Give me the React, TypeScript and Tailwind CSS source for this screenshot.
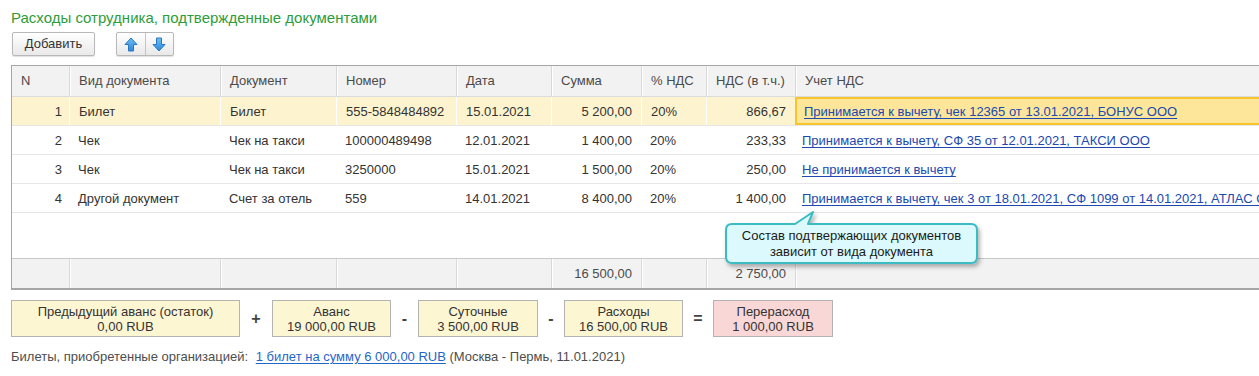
import React from 'react';

const COLS = 'grid-cols-[57px_151px_116px_120px_95px_90px_65px_89px_1fr]';

type Row = {
  n: string;
  kind: string;
  doc: string;
  num: string;
  date: string;
  sum: string;
  pct: string;
  vat: string;
  acc: string;
};

const ROWS: Row[] = [
  { n: '1', kind: 'Билет', doc: 'Билет', num: '555-5848484892', date: '15.01.2021', sum: '5 200,00', pct: '20%', vat: '866,67', acc: 'Принимается к вычету, чек 12365 от 13.01.2021, БОНУС ООО' },
  { n: '2', kind: 'Чек', doc: 'Чек на такси', num: '100000489498', date: '12.01.2021', sum: '1 400,00', pct: '20%', vat: '233,33', acc: 'Принимается к вычету, СФ 35 от 12.01.2021, ТАКСИ ООО' },
  { n: '3', kind: 'Чек', doc: 'Чек на такси', num: '3250000', date: '15.01.2021', sum: '1 500,00', pct: '20%', vat: '250,00', acc: 'Не принимается к вычету' },
  { n: '4', kind: 'Другой документ', doc: 'Счет за отель', num: '559', date: '14.01.2021', sum: '8 400,00', pct: '20%', vat: '1 400,00', acc: 'Принимается к вычету, чек 3 от 18.01.2021, СФ 1099 от 14.01.2021, АТЛАС ООО' },
];

const HEADERS = ['N', 'Вид документа', 'Документ', 'Номер', 'Дата', 'Сумма', '% НДС', 'НДС (в т.ч.)', 'Учет НДС'];

const Arrow: React.FC<{ down?: boolean }> = ({ down }) => (
  <svg width="14" height="15" viewBox="0 0 14 15" className={down ? 'rotate-180' : ''}>
    <defs>
      <linearGradient id={down ? 'ag-d' : 'ag-u'} x1="0" y1="0" x2="0" y2="1">
        <stop offset="0" stopColor={down ? '#2f86d8' : '#6cc0f5'} />
        <stop offset="1" stopColor={down ? '#6cc0f5' : '#2f86d8'} />
      </linearGradient>
    </defs>
    <path d="M7 1 L13 7.5 H9.5 V14 H4.5 V7.5 H1 Z" fill={`url(#${down ? 'ag-d' : 'ag-u'})`} stroke="#2a78c4" strokeWidth="1" strokeLinejoin="round" />
  </svg>
);

const SumBox: React.FC<{ title: string; value: string; w: string; red?: boolean }> = ({ title, value, w, red }) => (
  <div
    className={`${w} h-[37px] border border-[#b3b3b3] flex flex-col items-center justify-center text-[13px] leading-[15px] text-[#333] ${
      red ? 'bg-[#f9d7d7]' : 'bg-[#fdf6d3]'
    }`}
  >
    <span>{title}</span>
    <span>{value}</span>
  </div>
);

const Op: React.FC<{ ch: string; w: string }> = ({ ch, w }) => (
  <div className={`${w} flex items-center justify-center text-[16px] font-bold text-[#444]`}>{ch}</div>
);

const HDIV = 'border-l border-[#d8d8d8] shadow-[inset_1px_0_0_#ffffff]';

export default function App() {
  return (
    <div
      className="relative w-[1259px] h-[376px] overflow-hidden bg-white text-[13px] text-[#333]"
      style={{ fontFamily: '"Liberation Sans", Arial, sans-serif' }}
    >
      <div className="pl-[11px] pt-[8px] text-[15px] leading-[20px] text-[#2e9c3a]">
        Расходы сотрудника, подтвержденные документами
      </div>

      {/* toolbar */}
      <div className="flex items-center pl-[12px] mt-[4px] gap-[21px]">
        <button className="h-[24px] w-[83px] rounded-[2px] border border-[#b8b8b8] bg-gradient-to-b from-white to-[#e9e9e9] shadow-[0_1px_1px_rgba(0,0,0,0.12)] text-[13px] text-[#333]">
          Добавить
        </button>
        <div className="flex h-[24px] w-[58px] rounded-[2px] border border-[#b8b8b8] bg-gradient-to-b from-white to-[#e9e9e9] shadow-[0_1px_1px_rgba(0,0,0,0.12)]">
          <div className="flex-1 flex items-center justify-center border-r border-[#c4c4c4]">
            <Arrow />
          </div>
          <div className="flex-1 flex items-center justify-center">
            <Arrow down />
          </div>
        </div>
      </div>

      {/* table */}
      <div className="ml-[11px] mt-[9px] w-[1300px] border-t border-l border-b-2 border-[#a6a6a6]">
        <div className={`grid ${COLS} h-[31px] bg-[#f2f2f2] text-[#4a4a4a] border-b border-[#dcdcdc]`}>
          {HEADERS.map((h, i) => (
            <div key={h} className={`flex items-center px-[9px] pb-[1px] ${i > 0 ? HDIV : ''}`}>
              {h}
            </div>
          ))}
        </div>

        {ROWS.map((r, idx) => {
          const sel = idx === 0;
          const cell = `flex items-center px-[9px] pt-[2px] whitespace-nowrap overflow-hidden ${sel ? 'border-l border-white' : ''}`;
          return (
            <div
              key={r.n}
              className={`grid ${COLS} h-[29px] border-b border-[#e6e6e6] ${sel ? 'bg-[#fdf3cf]' : 'bg-white'}`}
            >
              <div className="flex items-center justify-end px-[7px] pt-[2px]">{r.n}</div>
              <div className={cell}>{r.kind}</div>
              <div className={cell}>{r.doc}</div>
              <div className={cell}>{r.num}</div>
              <div className={cell}>{r.date}</div>
              <div className={`${cell} justify-end`}>{r.sum}</div>
              <div className={cell}>{r.pct}</div>
              <div className={`${cell} justify-end`}>{r.vat}</div>
              <div
                className={`flex items-center px-[7px] pt-[2px] whitespace-nowrap overflow-hidden ${
                  sel ? 'bg-[#fde699] border-2 border-[#f6c42c]' : ''
                }`}
              >
                <a className="text-[#2049b0] underline underline-offset-2 decoration-[#2049b0]">{r.acc}</a>
              </div>
            </div>
          );
        })}

        <div className="h-[45px] bg-white" />

        <div className={`grid ${COLS} h-[30px] bg-[#f2f2f2] border-t border-[#c8c8c8] text-[#4a4a4a]`}>
          <div />
          <div className={HDIV} />
          <div className={HDIV} />
          <div className={HDIV} />
          <div className={HDIV} />
          <div className={`${HDIV} flex items-center justify-end px-[9px]`}>16 500,00</div>
          <div className={HDIV} />
          <div className={`${HDIV} flex items-center justify-end px-[9px]`}>2 750,00</div>
          <div className={HDIV} />
        </div>
      </div>

      {/* totals */}
      <div className="flex pl-[11px] mt-[10px]">
        <SumBox title="Предыдущий аванс (остаток)" value="0,00 RUB" w="w-[229px]" />
        <Op ch="+" w="w-[32px]" />
        <SumBox title="Аванс" value="19 000,00 RUB" w="w-[119px]" />
        <Op ch="-" w="w-[27px]" />
        <SumBox title="Суточные" value="3 500,00 RUB" w="w-[120px]" />
        <Op ch="-" w="w-[26px]" />
        <SumBox title="Расходы" value="16 500,00 RUB" w="w-[119px]" />
        <Op ch="=" w="w-[30px]" />
        <SumBox title="Перерасход" value="1 000,00 RUB" w="w-[120px]" red />
      </div>

      <div className="pl-[11px] mt-[12px] text-[13px] text-[#4d4d4d] leading-[16px]">
        Билеты, приобретенные организацией:{' '}
        <a className="ml-[4px] text-[#1f66c9] underline underline-offset-2">1 билет на сумму 6 000,00 RUB</a>{' '}
        (Москва - Пермь, 11.01.2021)
      </div>

      {/* callout */}
      <svg className="absolute left-[720px] top-[205px]" width="270" height="70" viewBox="0 0 270 70">
        <defs>
          <filter id="sh" x="-10%" y="-20%" width="130%" height="160%">
            <feDropShadow dx="2" dy="3" stdDeviation="2" floodColor="#000" floodOpacity="0.3" />
          </filter>
        </defs>
        <path
          d="M12 19 H75 L93 7 L88 19 H251 Q257 19 257 25 V52 Q257 58 251 58 H12 Q6 58 6 52 V25 Q6 19 12 19 Z"
          fill="#dcfafd"
          stroke="#3bbcc4"
          strokeWidth="2"
          strokeLinejoin="round"
          filter="url(#sh)"
        />
      </svg>
      <div className="absolute left-[726px] top-[224px] w-[251px] h-[39px] flex flex-col items-center justify-center text-[13px] leading-[16px] text-[#1a1a1a]">
        <span>Состав подтвержающих документов</span>
        <span>зависит от вида документа</span>
      </div>
    </div>
  );
}
